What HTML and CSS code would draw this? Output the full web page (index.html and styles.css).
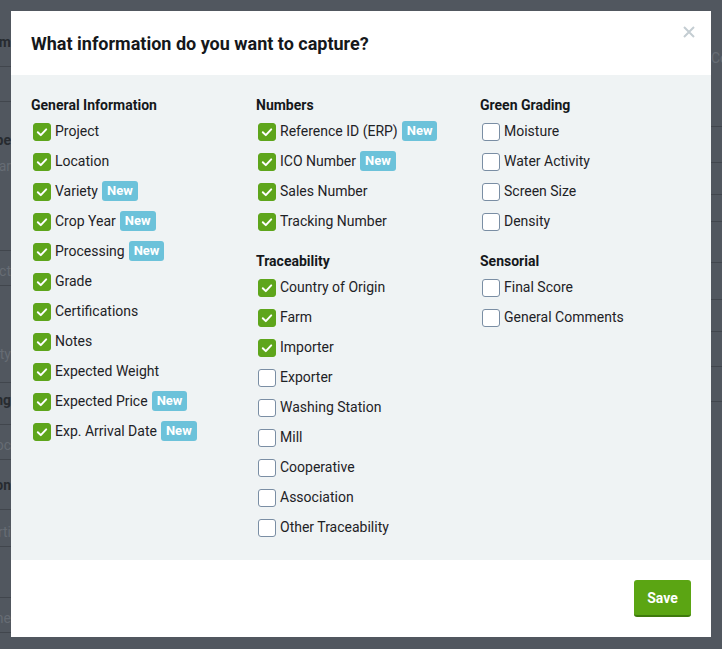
FILE: index.html
```html
<!DOCTYPE html>
<html lang="en">
<head>
    <meta charset="UTF-8">
    <meta name="viewport" content="width=device-width, initial-scale=1.0">
    <title>Capture settings</title>
    <link rel="stylesheet" href="styles.css">
</head>
<body>
    <!-- page behind the modal -->
    <div class="page">
        <div class="page-col page-left">
            <div class="prow head h-a"><b>Item</b></div>
            <div class="prow h-b"></div>
            <div class="prow h-c"><b>Type</b><span class="muted">Year</span></div>
            <div class="prow h-d"><span class="muted">Project</span></div>
            <div class="prow h-e"><span class="muted">Variety</span></div>
            <div class="prow h-f"><b>Grading</b></div>
            <div class="prow h-g"><span class="muted">Loc</span></div>
            <div class="prow h-h"><b>Certification</b></div>
            <div class="prow h-i"><span class="muted">Certi</span></div>
            <div class="prow h-j"></div>
            <div class="prow h-k"><span class="muted">None</span></div>
        </div>
        <div class="page-col page-right">
            <div class="prow r-a"><span class="muted">Content</span></div>
            <div class="prow r-b"></div>
            <div class="prow r-c"></div>
            <div class="prow r-d"></div>
            <div class="prow r-e"></div>
            <div class="prow r-f"></div>
            <div class="prow r-g"></div>
            <div class="prow r-h"></div>
            <div class="prow r-i"></div>
        </div>
    </div>

    <div class="backdrop">
        <div class="modal">
            <div class="modal-header">
                <h2>What information do you want to capture?</h2>
                <button class="close" type="button" aria-label="Close">
                    <svg width="12" height="12" viewBox="0 0 12 12"><path d="M1 1L11 11M11 1L1 11" stroke="#c4cdd2" stroke-width="2" fill="none"/></svg>
                </button>
            </div>

            <div class="modal-body" id="fields"></div>

            <div class="modal-footer">
                <button class="save" type="button">Save</button>
            </div>
        </div>
    </div>

    <script>
        const columns = [
            [
                { title: 'General Information', items: [
                    ['Project', 1], ['Location', 1], ['Variety', 1, 1], ['Crop Year', 1, 1],
                    ['Processing', 1, 1], ['Grade', 1], ['Certifications', 1], ['Notes', 1],
                    ['Expected Weight', 1], ['Expected Price', 1, 1], ['Exp. Arrival Date', 1, 1]
                ]}
            ],
            [
                { title: 'Numbers', items: [
                    ['Reference ID (ERP)', 1, 1], ['ICO Number', 1, 1], ['Sales Number', 1], ['Tracking Number', 1]
                ]},
                { title: 'Traceability', items: [
                    ['Country of Origin', 1], ['Farm', 1], ['Importer', 1], ['Exporter', 0],
                    ['Washing Station', 0], ['Mill', 0], ['Cooperative', 0], ['Association', 0],
                    ['Other Traceability', 0]
                ]}
            ],
            [
                { title: 'Green Grading', items: [
                    ['Moisture', 0], ['Water Activity', 0], ['Screen Size', 0], ['Density', 0]
                ]},
                { title: 'Sensorial', items: [
                    ['Final Score', 0], ['General Comments', 0]
                ]}
            ]
        ];

        const tick = '<svg width="18" height="18" viewBox="0 0 18 18"><path d="M4.8 9.2L7.8 12.1L13.2 6.4" stroke="#fff" stroke-width="2" fill="none" stroke-linecap="round" stroke-linejoin="round"/></svg>';

        function toggle(row) {
            const box = row.querySelector('.box');
            box.classList.toggle('checked');
            box.innerHTML = box.classList.contains('checked') ? tick : '';
        }

        const body = document.getElementById('fields');
        for (const col of columns) {
            const colEl = document.createElement('div');
            colEl.className = 'col';
            for (const section of col) {
                let html = '<div class="section"><h4>' + section.title + '</h4>';
                for (const [label, checked, isNew] of section.items) {
                    html += '<div class="field" onclick="toggle(this)">' +
                        '<span class="box' + (checked ? ' checked' : '') + '">' + (checked ? tick : '') + '</span>' +
                        '<span class="label">' + label + '</span>' +
                        (isNew ? '<span class="badge">New</span>' : '') +
                        '</div>';
                }
                html += '</div>';
                colEl.innerHTML += html;
            }
            body.appendChild(colEl);
        }
    </script>
</body>
</html>
```

FILE: styles.css
```css
* {
    box-sizing: border-box;
}
body {
    margin: 0;
    font-family: Roboto, "Liberation Sans", sans-serif;
    font-size: 14px;
    color: #1e2226;
    background-color: #51575f;
    overflow: hidden;
    height: 649px;
}

/* faint page behind the dialog */
.page {
    display: flex;
    justify-content: space-between;
    height: 100%;
}
.page-col {
    width: 90px;
    font-size: 14px;
    color: #272b30;
}
.page-left {
    margin-left: -79px;
    text-align: right;
}
.page-right {
    margin-right: -79px;
}
.prow {
    border-bottom: 1px solid #41464d;
    display: flex;
    flex-direction: column;
    justify-content: flex-end;
    padding-bottom: 6px;
    white-space: nowrap;
}
.page-left .prow {
    align-items: flex-end;
}
.prow b {
    margin-bottom: 10px;
}
.muted {
    color: #666c74;
}
.h-a { height: 67px; }
.h-b { height: 35px; }
.h-c { height: 149px; padding-bottom: 76px; }
.h-d { height: 35px; }
.h-e { height: 97px; padding-bottom: 20px; }
.h-f { height: 42px; }
.h-g { height: 35px; }
.h-h { height: 50px; }
.h-i { height: 37px; }
.h-j { height: 51px; }
.h-k { height: 35px; }
.r-a { height: 127px; padding-bottom: 60px; }
.r-b { height: 36px; }
.r-c { height: 32px; }
.r-d { height: 27px; }
.r-e { height: 41px; }
.r-f { height: 37px; }
.r-g { height: 32px; }
.r-h { height: 35px; }
.r-i { height: 35px; }

/* dialog */
.backdrop {
    position: fixed;
    top: 0;
    left: 0;
    right: 0;
    bottom: 0;
    padding: 11px 11px 12px 11px;
}
.modal {
    width: 700px;
    background-color: white;
    display: flex;
    flex-direction: column;
}
.modal-header {
    height: 64px;
    padding: 20px 20px 0 20px;
    display: flex;
    justify-content: space-between;
    align-items: flex-start;
}
.modal-header h2 {
    margin: 0;
    font-size: 18px;
    line-height: 26px;
    font-weight: 700;
    color: #15181b;
}
.close {
    border: none;
    background: none;
    padding: 0;
    margin: -5px -4px 0 0;
    width: 12px;
    height: 12px;
    cursor: pointer;
}
.close svg {
    display: block;
}

.modal-body {
    background-color: #eff3f4;
    padding: 20px 0 18px 20px;
    display: grid;
    grid-template-columns: 225px 224px 1fr;
}
.section + .section {
    margin-top: 15px;
}
.section h4 {
    margin: 0 0 1px 0;
    font-size: 14px;
    line-height: 20px;
    font-weight: 700;
    color: #15181b;
}
.field {
    height: 30px;
    display: flex;
    align-items: center;
    cursor: pointer;
}
.box {
    width: 18px;
    height: 18px;
    margin: 1px 4px 0 2px;
    border-radius: 3px;
    border: 1px solid #7a8ea4;
    background-color: white;
    flex: none;
}
.box.checked {
    border-color: #5ea51b;
    background-color: #5ea51b;
}
.box svg {
    display: block;
    margin: -1px;
}
.label {
    line-height: 18px;
}
.badge {
    margin-left: 4px;
    height: 20px;
    line-height: 20px;
    padding: 0 5px;
    border-radius: 3px;
    background-color: #6cc2da;
    color: white;
    font-weight: 700;
    font-size: 13px;
}

.modal-footer {
    height: 77px;
    padding: 20px;
    display: flex;
    justify-content: flex-end;
}
.save {
    width: 57px;
    height: 37px;
    border: none;
    border-bottom: 2px solid #3e7a0c;
    border-radius: 3px;
    background-color: #5ba513;
    color: white;
    font-family: Roboto, "Liberation Sans", sans-serif;
    font-size: 14px;
    font-weight: 700;
    cursor: pointer;
}
```
